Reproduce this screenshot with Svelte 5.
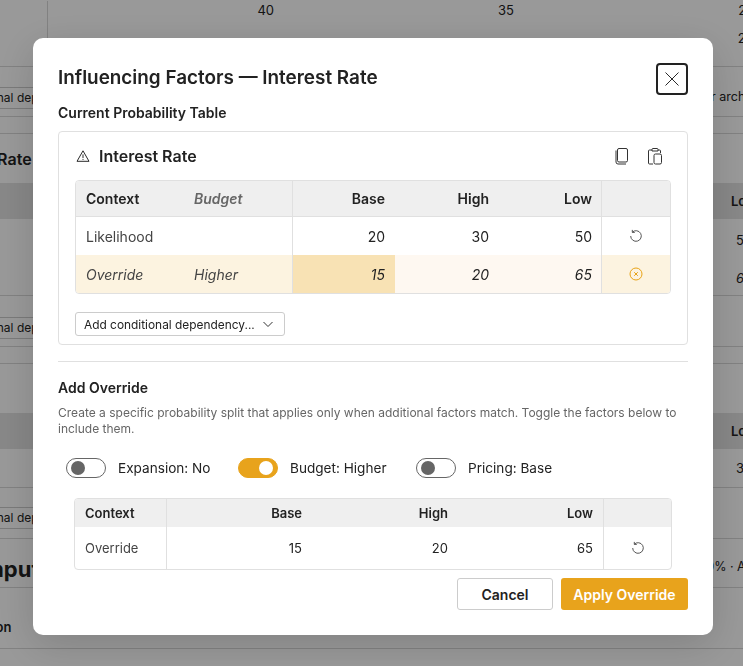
<script>
	let factors = $state([
		{ label: 'Expansion: No', on: false },
		{ label: 'Budget: Higher', on: true },
		{ label: 'Pricing: Base', on: false }
	]);
	const toggle = (f) => (f.on = !f.on);
</script>

<div class="page">
	<div class="strip numbers">
		<span class="first"></span>
		<span>40</span>
		<span>35</span>
		<span>25</span>
	</div>
	<div class="strip numbers second">
		<span class="first"></span>
		<span></span>
		<span></span>
		<span>20</span>
	</div>
	<div class="strip btn-row lined">
		<span class="pill">Add conditional dependency...</span>
		<span class="note">or architecture</span>
	</div>
	<div class="strip gap lined"></div>
	<div class="strip heading"><b>Interest Rate</b></div>
	<div class="strip head-row"><span>Low</span></div>
	<div class="strip val"><span>50</span></div>
	<div class="strip val lined"><span class="it">65</span></div>
	<div class="strip btn-row2 lined"><span class="pill">Add conditional dependency...</span></div>
	<div class="strip gap lined"></div>
	<div class="strip blank"></div>
	<div class="strip head-row"><span>Low</span></div>
	<div class="strip val lined tall"><span>35</span></div>
	<div class="strip btn-row3 lined"><span class="pill">Add conditional dependency...</span></div>
	<div class="strip big lined">
		<b>Computed</b>
		<span>40% · Applied</span>
	</div>
	<div class="strip last lined"><b>Expansion</b></div>
</div>

<div class="scrim"></div>

<div class="modal" role="dialog" aria-modal="true">
	<header>
		<h1>Influencing Factors — Interest Rate</h1>
		<button class="close" aria-label="Close">
			<svg width="16" height="16" viewBox="0 0 16 16" fill="none" stroke="#2a2a2a" stroke-width="1">
				<path d="M1.5 1.5l13 13M14.5 1.5l-13 13" />
			</svg>
		</button>
	</header>

	<h2>Current Probability Table</h2>

	<section class="card">
		<div class="card-head">
			<svg class="warn" width="14" height="14" viewBox="0 0 14 14" fill="none" stroke="#2a2a2a" stroke-width="1">
				<path d="M7 1.8L13 12.3H1L7 1.8z" stroke-linejoin="round" />
				<path d="M7 5.4v3.6M7 9.9v1" />
			</svg>
			<h3>Interest Rate</h3>
			<div class="tools">
				<svg width="16" height="18" viewBox="0 0 16 18" fill="none" stroke="#333" stroke-width="1">
					<rect x="3.5" y="1.5" width="10" height="13.5" rx="1.5" />
					<path d="M2 3.5v11.5a2 2 0 0 0 2 2h8" />
				</svg>
				<svg width="16" height="18" viewBox="0 0 16 18" fill="none" stroke="#333" stroke-width="1">
					<path d="M5 3H2.5a1 1 0 0 0-1 1v12a1 1 0 0 0 1 1H6" />
					<path d="M11 3h1.500a1 1 0 0 1 1 1v2" />
					<path d="M5 4V2.500a1 1 0 0 1 1-1h4a1 1 0 0 1 1 1V4z" />
					<rect x="7" y="7" width="7.500" height="10" rx="1.500" />
				</svg>
			</div>
		</div>

		<table class="prob">
			<colgroup>
				<col style="width: 108px" />
				<col style="width: 108px" />
				<col style="width: 103px" />
				<col style="width: 104px" />
				<col style="width: 102px" />
				<col style="width: 69px" />
			</colgroup>
			<thead>
				<tr>
					<th>Context</th>
					<th class="dim">Budget</th>
					<th class="num bl">Base</th>
					<th class="num">High</th>
					<th class="num end">Low</th>
					<th class="act bl"></th>
				</tr>
			</thead>
			<tbody>
				<tr>
					<td class="soft">Likelihood</td>
					<td></td>
					<td class="num bl">20</td>
					<td class="num">30</td>
					<td class="num end">50</td>
					<td class="act bl">
						<svg width="14" height="14" viewBox="0 0 14 14" fill="none" stroke="#555" stroke-width="1">
							<path d="M3.300 3.200A5.300 5.300 0 1 1 1.700 7" />
							<path d="M3.300 0.900v2.500h2.500" />
						</svg>
					</td>
				</tr>
				<tr class="over">
					<td class="soft">Override</td>
					<td class="soft">Higher</td>
					<td class="num bl hit">15</td>
					<td class="num pale">20</td>
					<td class="num pale end">65</td>
					<td class="act bl">
						<svg width="14" height="14" viewBox="0 0 14 14" fill="none" stroke="#e8a317" stroke-width="1">
							<circle cx="7" cy="7" r="6" />
							<path d="M5.200 5.200l3.600 3.600M8.800 5.200l-3.600 3.600" />
						</svg>
					</td>
				</tr>
			</tbody>
		</table>

		<button class="dropdown">
			<span>Add conditional dependency...</span>
			<svg width="12" height="12" viewBox="0 0 12 12" fill="none" stroke="#333" stroke-width="1">
				<path d="M1.500 4l4.500 4.500L10.500 4" />
			</svg>
		</button>
	</section>

	<hr />

	<h2>Add Override</h2>
	<p>Create a specific probability split that applies only when additional factors match. Toggle the factors below to include them.</p>

	<div class="factors">
		{#each factors as f}
			<button class="factor" onclick={() => toggle(f)}>
				<span class="switch" class:on={f.on}><i></i></span>
				<span>{f.label}</span>
			</button>
		{/each}
	</div>

	<table class="prob small">
		<colgroup>
			<col style="width: 91px" />
			<col style="width: 146px" />
			<col style="width: 146px" />
			<col style="width: 145px" />
			<col style="width: 68px" />
		</colgroup>
		<thead>
			<tr>
				<th>Context</th>
				<th class="num bl">Base</th>
				<th class="num">High</th>
				<th class="num">Low</th>
				<th class="act bl"></th>
			</tr>
		</thead>
		<tbody>
			<tr>
				<td class="soft">Override</td>
				<td class="num bl">15</td>
				<td class="num">20</td>
				<td class="num">65</td>
				<td class="act bl">
					<svg width="14" height="14" viewBox="0 0 14 14" fill="none" stroke="#555" stroke-width="1">
						<path d="M3.300 3.200A5.300 5.300 0 1 1 1.700 7" />
						<path d="M3.300 0.900v2.500h2.500" />
					</svg>
				</td>
			</tr>
		</tbody>
	</table>

	<footer>
		<button class="cancel">Cancel</button>
		<button class="apply">Apply Override</button>
	</footer>
</div>

<style>
	:global(body) {
		margin: 0;
		height: 666px;
		overflow: hidden;
		background: #fff;
		font-family: Inter, 'Liberation Sans', sans-serif;
		color: #222;
	}

	.page {
		width: 743px;
		font-size: 13px;
		overflow: hidden;
	}

	.strip {
		box-sizing: border-box;
		display: flex;
		align-items: center;
		justify-content: space-between;
		white-space: nowrap;
		width: 743px;
	}

	.lined {
		border-bottom: 1px solid #d8d8d8;
	}

	.numbers {
		height: 28px;
		justify-content: flex-start;
		align-items: flex-start;
		padding-top: 1px;
	}

	.numbers span {
		flex: none;
		width: 240px;
		box-sizing: border-box;
		text-align: right;
		padding-right: 14px;
		line-height: 18px;
	}

	.numbers .first {
		width: 48px;
		height: 38px;
		border-right: 1px solid #d8d8d8;
		padding: 0;
	}

	.second {
		height: 39px;
		border-bottom: 1px solid #d8d8d8;
	}

	.second .first {
		height: 10px;
		margin-top: -1px;
	}

	.btn-row {
		height: 50px;
		padding-top: 20px;
		align-items: flex-start;
	}

	.pill {
		box-sizing: border-box;
		flex: none;
		border: 1px solid #ccc;
		border-radius: 4px;
		height: 22px;
		line-height: 20px;
		padding: 0 8px;
		margin-left: -84px;
		width: 210px;
		font-size: 12px;
	}

	.note {
		margin-right: -47px;
		font-size: 12.500px;
		line-height: 20px;
	}

	.gap {
		height: 17px;
	}

	.heading {
		height: 49px;
		justify-content: flex-start;
	}

	.heading b {
		margin-left: -66px;
		font-size: 16px;
		font-weight: 600;
	}

	.head-row {
		height: 36px;
		background: #e2e2e2;
		justify-content: flex-end;
		font-weight: 600;
	}

	.head-row span {
		margin-right: -14px;
	}

	.val {
		height: 38px;
		padding-top: 3px;
		justify-content: flex-end;
	}

	.val.lined {
		height: 39px;
	}

	.val.tall {
		height: 39px;
		padding-top: 0;
	}

	.val span {
		margin-right: -9px;
	}

	.it {
		font-style: italic;
	}

	.btn-row2 {
		height: 51px;
		padding-top: 21px;
		align-items: flex-start;
	}

	.btn-row3 {
		height: 51px;
		padding-top: 19px;
		align-items: flex-start;
	}

	.blank {
		height: 49px;
	}

	.big {
		height: 49px;
		padding-top: 12px;
	}

	.big b {
		font-size: 22px;
		font-weight: 700;
		margin-left: -46px;
	}

	.big span {
		margin-right: -39px;
		margin-top: -6px;
		font-size: 12.500px;
	}

	.last {
		height: 61px;
		justify-content: flex-start;
	}

	.last b {
		font-size: 13px;
		font-weight: 600;
		margin-left: -54px;
		margin-top: 17px;
	}

	.scrim {
		position: fixed;
		inset: 0;
		background: rgba(0, 0, 0, 0.4);
	}

	.modal {
		position: fixed;
		left: 33px;
		top: 38px;
		width: 680px;
		height: 597px;
		box-sizing: border-box;
		padding: 25px;
		background: #fff;
		border-radius: 10px;
		box-shadow: 0 10px 40px rgba(0, 0, 0, 0.16);
		display: flex;
		flex-direction: column;
	}

	header {
		display: flex;
		justify-content: space-between;
		align-items: flex-start;
		height: 40px;
	}

	h1 {
		margin: 0;
		font-size: 18.900px;
		font-weight: 600;
		line-height: 29px;
		color: #222;
	}

	.close {
		box-sizing: border-box;
		width: 32px;
		height: 32px;
		padding: 0;
		display: flex;
		align-items: center;
		justify-content: center;
		background: #fff;
		border: 2px solid #222;
		border-radius: 4px;
	}

	h2 {
		margin: 0;
		font-size: 14px;
		font-weight: 600;
		line-height: 20px;
		color: #222;
	}

	.card {
		box-sizing: border-box;
		margin-top: 8px;
		height: 214px;
		border: 1px solid #e0e0e0;
		border-radius: 4px;
		padding: 0 16px;
	}

	.card-head {
		display: flex;
		align-items: center;
		height: 48px;
	}

	.warn {
		margin-left: 1px;
	}

	h3 {
		margin: 0 0 0 9px;
		font-size: 16px;
		font-weight: 600;
		color: #222;
	}

	.tools {
		margin-left: auto;
		margin-right: 8px;
		display: flex;
		gap: 17px;
	}

	.prob {
		box-sizing: border-box;
		width: 596px;
		border-collapse: separate;
		border-spacing: 0;
		table-layout: fixed;
		border: 1px solid #e0e0e0;
		border-radius: 4px;
		overflow: hidden;
		font-size: 14px;
	}

	th,
	td {
		box-sizing: border-box;
		padding: 0 10px;
		text-align: left;
		font-weight: 400;
	}

	th {
		height: 36px;
		background: #efefef;
		font-weight: 600;
		border-bottom: 1px solid #e0e0e0;
		color: #222;
	}

	td {
		height: 38px;
	}

	.prob .dim {
		font-style: italic;
		color: #666;
	}

	.prob .num {
		text-align: right;
	}

	.prob .end {
		padding-right: 9px;
	}

	.prob .act {
		text-align: center;
		padding: 0;
	}

	.prob .act svg {
		display: block;
		margin: 0 auto;
	}

	.bl {
		border-left: 1px solid #e0e0e0;
	}

	.soft {
		color: #444;
	}

	.over td {
		background: #fcf3e0;
		font-style: italic;
	}

	.over .hit {
		background: #f8e2b4;
	}

	.over .pale {
		background: #fef8f1;
	}

	.dropdown {
		box-sizing: border-box;
		margin-top: 18px;
		width: 210px;
		height: 24px;
		display: flex;
		align-items: center;
		justify-content: space-between;
		padding: 0 10px 0 8px;
		background: #fff;
		border: 1px solid #ccc;
		border-radius: 3px;
		font: inherit;
		font-size: 11.900px;
		white-space: nowrap;
		color: #222;
	}

	hr {
		width: 100%;
		margin: 16px 0;
		border: 0;
		border-top: 1px solid #e0e0e0;
	}

	p {
		margin: 7px 0 0;
		font-size: 12px;
		line-height: 16px;
		color: #666;
	}

	.factors {
		display: grid;
		grid-template-columns: 172px 178px auto;
		justify-items: start;
		margin-top: 21px;
		padding-left: 8px;
	}

	.factor {
		display: flex;
		align-items: center;
		gap: 12px;
		padding: 0;
		background: none;
		border: 0;
		font: inherit;
		font-size: 13.600px;
		color: #222;
	}

	.switch {
		box-sizing: border-box;
		width: 40px;
		height: 20px;
		padding: 2px 4px;
		border: 1px solid #666;
		border-radius: 10px;
		display: flex;
		align-items: center;
	}

	.switch i {
		width: 14px;
		height: 14px;
		border-radius: 50%;
		background: #666;
	}

	.switch.on {
		background: #e8a31c;
		border-color: #e8a31c;
		justify-content: flex-end;
	}

	.switch.on i {
		background: #fff;
	}

	.small {
		margin: 20px 0 0 16px;
		width: 598px;
		font-size: 13px;
	}

	.small th {
		height: 28px;
		border-bottom: 0;
	}

	.small td {
		height: 42px;
	}

	footer {
		margin-top: 8px;
		display: flex;
		justify-content: flex-end;
		gap: 8px;
	}

	footer button {
		height: 32px;
		box-sizing: border-box;
		border-radius: 3px;
		font: inherit;
		font-size: 14px;
		font-weight: 600;
	}

	.cancel {
		width: 96px;
		background: #fff;
		border: 1px solid #ccc;
		color: #222;
	}

	.apply {
		width: 127px;
		background: #e8a31c;
		border: 0;
		color: #fff;
	}
</style>
